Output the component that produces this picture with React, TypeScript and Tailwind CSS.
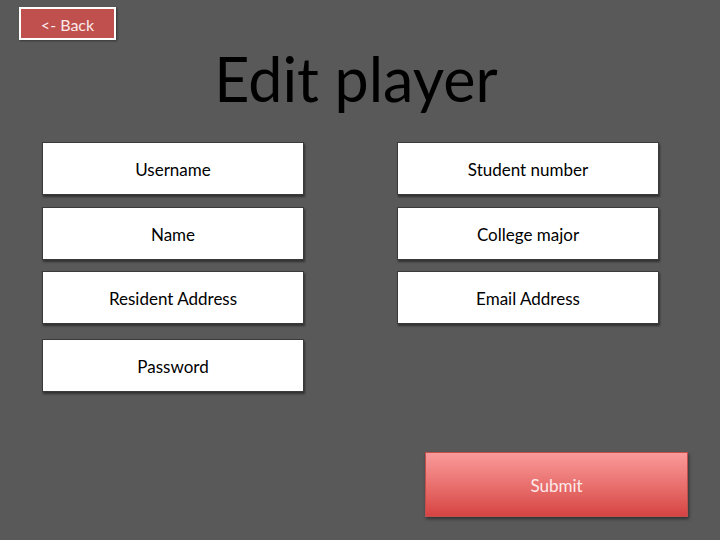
const LEFT = ["Username", "Name", "Resident Address", "Password"];
const RIGHT = ["Student number", "College major", "Email Address"];

function Field({ label, className = "" }: { label: string; className?: string }) {
  return (
    <div
      className={`flex h-[53px] w-[262px] items-center justify-center border border-[#3a3a3a] bg-white pt-[3px] text-[17px] text-black shadow-[1px_2px_2px_rgba(0,0,0,0.45)] ${className}`}
    >
      {label}
    </div>
  );
}

export default function App() {
  return (
    <div
      className="flex h-[540px] w-[720px] flex-col bg-[#595959]"
      style={{ fontFamily: "Lato, 'Open Sans', sans-serif" }}
    >
      <div className="ml-[19px] mt-[7px] flex h-[33px] w-[97px] items-center justify-center border-2 border-white bg-[#c0504d] pt-[2px] text-[16px] text-[#fbeaea] shadow-[1px_1px_2px_rgba(0,0,0,0.4)]">
        &lt;- Back
      </div>

      <h1 className="mt-[8px] pr-[8px] text-center text-[61px] leading-none text-black">Edit player</h1>

      <div className="ml-[42px] mt-[33px] flex gap-[93px]">
        <div className="flex flex-col">
          <Field label={LEFT[0]} />
          <Field label={LEFT[1]} className="mt-[12px]" />
          <Field label={LEFT[2]} className="mt-[11px]" />
          <Field label={LEFT[3]} className="mt-[15px]" />
        </div>
        <div className="flex flex-col">
          <Field label={RIGHT[0]} />
          <Field label={RIGHT[1]} className="mt-[12px]" />
          <Field label={RIGHT[2]} className="mt-[11px]" />
        </div>
      </div>

      <div className="ml-[425px] mt-[60px] flex h-[65px] w-[263px] items-center justify-center border border-[#c0504d] bg-gradient-to-b from-[#f99a9a] to-[#d64343] pt-[3px] text-[17px] text-[#fdeaea] shadow-[1px_2px_3px_rgba(0,0,0,0.45)]">
        Submit
      </div>
    </div>
  );
}
